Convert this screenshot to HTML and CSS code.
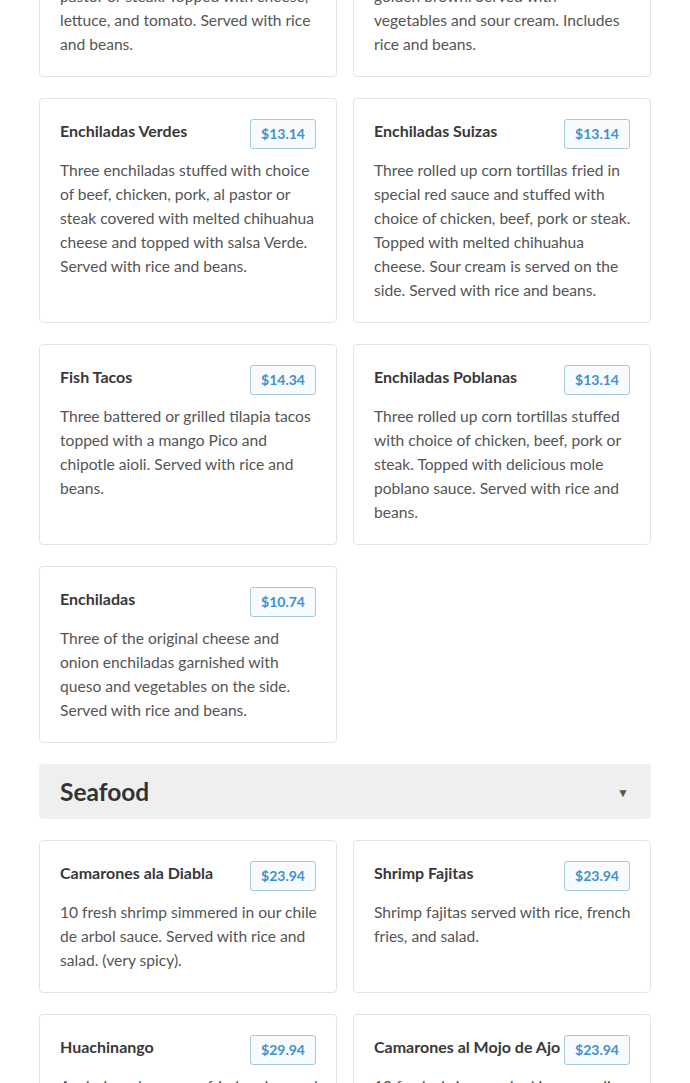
FILE: index.html
```html
<!DOCTYPE html>
<html lang="en">
<head>
<meta charset="utf-8">
<title>Menu</title>
<link rel="stylesheet" href="styles.css">
</head>
<body>
<main class="menu">
  <section class="grid grid-first">
    <article class="card">
      <div class="card-head"><h3 class="card-title">Tacos</h3><span class="price">$11.94</span></div>
      <p class="card-desc">Three tacos with beef, chicken, al<br>pastor or steak. Topped with cheese, lettuce, and tomato. Served with rice and beans.</p>
    </article>
    <article class="card">
      <div class="card-head"><h3 class="card-title">Chimichangas</h3><span class="price">$12.94</span></div>
      <p class="card-desc">Two crispy chimichangas fried to a<br>golden brown. Served with<br>vegetables and sour cream. Includes rice and beans.</p>
    </article>
    <article class="card">
      <div class="card-head"><h3 class="card-title">Enchiladas Verdes</h3><span class="price">$13.14</span></div>
      <p class="card-desc">Three enchiladas stuffed with choice of beef, chicken, pork, al pastor or steak covered with melted chihuahua cheese and topped with salsa Verde. Served with rice and beans.</p>
    </article>
    <article class="card">
      <div class="card-head"><h3 class="card-title">Enchiladas Suizas</h3><span class="price">$13.14</span></div>
      <p class="card-desc">Three rolled up corn tortillas fried in special red sauce and stuffed with choice of chicken, beef, pork or steak. Topped with melted chihuahua cheese. Sour cream is served on the side. Served with rice and beans.</p>
    </article>
    <article class="card">
      <div class="card-head"><h3 class="card-title">Fish Tacos</h3><span class="price">$14.34</span></div>
      <p class="card-desc">Three battered or grilled tilapia tacos topped with a mango Pico and chipotle aioli. Served with rice and beans.</p>
    </article>
    <article class="card">
      <div class="card-head"><h3 class="card-title">Enchiladas Poblanas</h3><span class="price">$13.14</span></div>
      <p class="card-desc">Three rolled up corn tortillas stuffed with choice of chicken, beef, pork or steak. Topped with delicious mole poblano sauce. Served with rice and beans.</p>
    </article>
    <article class="card">
      <div class="card-head"><h3 class="card-title">Enchiladas</h3><span class="price">$10.74</span></div>
      <p class="card-desc">Three of the original cheese and onion enchiladas garnished with queso and vegetables on the side. Served with rice and beans.</p>
    </article>
  </section>

  <header class="category">
    <h2 class="category-title">Seafood</h2>
    <span class="category-arrow">&#9660;</span>
  </header>

  <section class="grid">
    <article class="card">
      <div class="card-head"><h3 class="card-title">Camarones ala Diabla</h3><span class="price">$23.94</span></div>
      <p class="card-desc">10 fresh shrimp simmered in our chile de arbol sauce. Served with rice and salad. (very spicy).</p>
    </article>
    <article class="card">
      <div class="card-head"><h3 class="card-title">Shrimp Fajitas</h3><span class="price">$23.94</span></div>
      <p class="card-desc">Shrimp fajitas served with rice, french fries, and salad.</p>
    </article>
    <article class="card">
      <div class="card-head"><h3 class="card-title">Huachinango</h3><span class="price">$29.94</span></div>
      <p class="card-desc">A whole red snapper, fried and served with rice, salad and tortillas.</p>
    </article>
    <article class="card">
      <div class="card-head"><h3 class="card-title">Camarones al Mojo de Ajo</h3><span class="price">$23.94</span></div>
      <p class="card-desc">10 fresh shrimp cooked in our garlic butter sauce. Served with rice and salad.</p>
    </article>
  </section>
</main>
</body>
</html>
```

FILE: styles.css
```css
* { box-sizing: border-box; }

html, body {
  margin: 0;
  padding: 0;
  background: #ffffff;
}

body {
  font-family: Lato, "Open Sans", "Liberation Sans", sans-serif;
  color: #555555;
  font-size: 16px;
  line-height: 24px;
}

.menu {
  padding: 0 39px 40px;
}

.grid {
  display: grid;
  grid-template-columns: minmax(0, 1fr) minmax(0, 1fr);
  column-gap: 16px;
  row-gap: 21px;
}

.grid-first {
  margin-top: -100px;
}

.card {
  border: 1px solid #e4e4e4;
  border-radius: 4px;
  padding: 20px;
  background: #ffffff;
  min-width: 0;
}

.card-head {
  display: flex;
  justify-content: space-between;
  align-items: flex-start;
  gap: 2px;
}

.card-title {
  margin: 0;
  font-size: 16px;
  line-height: 24px;
  font-weight: 700;
  color: #383838;
  white-space: nowrap;
}

.price {
  flex: none;
  display: inline-block;
  height: 30px;
  line-height: 28px;
  padding: 0 10px;
  border: 1px solid #a6c8dd;
  border-radius: 3px;
  background: #f8fbfd;
  color: #3f91cc;
  font-size: 14px;
  font-weight: 700;
}

.card-desc {
  margin: 9px -3px 0 0;
  font-size: 15.6px;
  line-height: 24px;
  color: #555555;
}

.category {
  margin: 21px 0 21px;
  height: 55px;
  background: #efefef;
  border-radius: 4px;
  display: flex;
  align-items: center;
  justify-content: space-between;
  padding: 0 22px 0 21px;
}

.category-title {
  margin: 0;
  font-size: 24.5px;
  font-weight: 700;
  color: #333333;
  line-height: 30px;
}

.category-arrow {
  font-size: 12px;
  color: #555555;
  line-height: 1;
  margin-top: 2px;
}
```
